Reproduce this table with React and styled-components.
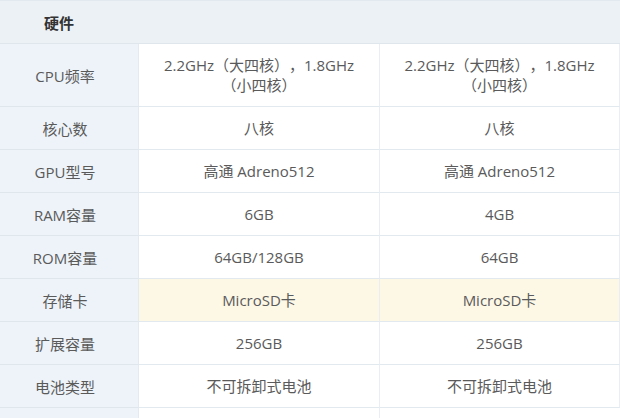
import React from 'react'
import styled, { createGlobalStyle } from 'styled-components'

const GlobalStyle = createGlobalStyle`
  body {
    margin: 0;
    background: #ffffff;
    font-family: "Open Sans", "Noto Sans CJK SC", sans-serif;
  }
`

const rows = [
  { label: 'CPU频率', values: ['2.2GHz（大四核），1.8GHz（小四核）', '2.2GHz（大四核），1.8GHz（小四核）'], tall: true },
  { label: '核心数', values: ['八核', '八核'] },
  { label: 'GPU型号', values: ['高通 Adreno512', '高通 Adreno512'] },
  { label: 'RAM容量', values: ['6GB', '4GB'] },
  { label: 'ROM容量', values: ['64GB/128GB', '64GB'] },
  { label: '存储卡', values: ['MicroSD卡', 'MicroSD卡'], highlight: true },
  { label: '扩展容量', values: ['256GB', '256GB'] },
  { label: '电池类型', values: ['不可拆卸式电池', '不可拆卸式电池'] },
  { label: '电池容量', values: ['3100mAh', '3100mAh'] },
]

const App = () => {
  return (
    <Container>
      <GlobalStyle />
      <Table>
        <Header>硬件</Header>
        {rows.map((row) => (
          <React.Fragment key={row.label}>
            <Label $tall={row.tall}>{row.label}</Label>
            {row.values.map((v, i) => (
              <Cell key={i} $tall={row.tall} $highlight={row.highlight}>{v}</Cell>
            ))}
          </React.Fragment>
        ))}
      </Table>
    </Container>
  )
}

export default App

const Container = styled.div`
    width: 620px;
    height: 418px;
    overflow: hidden;
`

const Table = styled.div`
    display: grid;
    grid-template-columns: 139px 241px 1fr;
    border-top: 1px solid #e2eaef;
`

const Header = styled.div`
    grid-column: 1 / -1;
    height: 42px;
    display: flex;
    align-items: center;
    padding-left: 44px;
    background: #ebf1f5;
    border-bottom: 1px solid #dfe7ed;
    font-size: 15px;
    font-weight: bold;
    color: #333;
`

const Label = styled.div`
    height: ${(p) => (p.$tall ? '62px' : '42px')};
    display: flex;
    align-items: center;
    justify-content: center;
    padding-right: 8px;
    background: #edf3f9;
    border-bottom: 1px solid #dfe7ed;
    border-right: 1px solid #e3ebf0;
    font-size: 15px;
    color: #5a5a5a;
`

const Cell = styled.div`
    height: ${(p) => (p.$tall ? '62px' : '42px')};
    display: flex;
    align-items: center;
    justify-content: center;
    text-align: center;
    padding: 0 14px;
    line-height: 20px;
    text-spacing-trim: space-all;
    background: ${(p) => (p.$highlight ? '#fdf7e6' : '#ffffff')};
    border-bottom: 1px solid #e3eaef;
    border-right: 1px solid #e8eef2;
    font-size: 15px;
    color: #5a5a5a;

    &:last-child {
        border-right: none;
    }
`
